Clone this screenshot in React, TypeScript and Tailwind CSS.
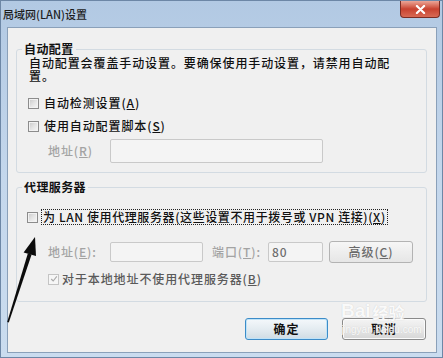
import React from "react";

const Key = ({ k }: { k: string }) => (
  <>
    (<span className="underline underline-offset-1">{k}</span>)
  </>
);

function CheckBox({ checked = false, disabled = false }: { checked?: boolean; disabled?: boolean }) {
  return (
    <span
      className={`flex h-[11px] w-[11px] shrink-0 items-center justify-center border ${
        disabled
          ? "border-[#c4c4c4] bg-[#f6f6f6]"
          : "border-[#8c8c8c] bg-gradient-to-br from-[#c8c8c8] via-[#e4e4e4] to-[#f8f8f8] shadow-[inset_0_0_0_1px_#f2f2f2]"
      }`}
    >
      {checked && (
        <svg viewBox="0 0 10 10" className="h-[8px] w-[8px]">
          <path d="M1.5 5 L4 7.5 L8.5 1.8" fill="none" stroke="#a9a9a9" strokeWidth="1.4" />
        </svg>
      )}
    </span>
  );
}

function Field({ w, h, children }: { w: string; h: string; children?: React.ReactNode }) {
  return (
    <div className={`${w} ${h} flex items-center rounded-[2px] border border-[#c9c9c9] bg-[#f4f4f4] pl-[3px] text-[#7a7a7a]`}>
      {children}
    </div>
  );
}

export default function App() {
  return (
    <div className="relative flex h-[358px] w-[443px] flex-col overflow-hidden border border-[#6d87a6] bg-gradient-to-b from-[#b2c9e3] via-[#c4d7ec] to-[#cadcef] font-['Noto_Sans_CJK_SC','Noto_Sans',sans-serif] text-[12px] font-medium tracking-[0.9px] text-[#111]">
      {/* title bar */}
      <div className="flex h-[26px] shrink-0 items-start justify-between">
        <span className="pl-[2px] pt-[6px] text-[11px] leading-[14px] tracking-normal text-[#1c1c1c]">
          局域网(LAN)设置
        </span>
        <div className="mr-[2px] flex h-[17px] w-[40px] items-center justify-center rounded-b-[4px] border border-t-0 border-[#7b2d24] bg-gradient-to-b from-[#eba597] via-[#c8412f] to-[#d86a55]">
          <svg viewBox="0 0 12 10" className="h-[9px] w-[11px]">
            <path d="M2 1 L10 9 M10 1 L2 9" stroke="#fff" strokeWidth="2.4" strokeLinecap="round" />
          </svg>
        </div>
      </div>

      {/* client area */}
      <div className="mb-[4px] ml-[6px] mr-[5px] flex flex-1 flex-col border border-[#8aa0b9] bg-[#f0f0f0] pl-[8px] pr-[9px] pt-[14px]">
        <fieldset className="rounded-[3px] border border-[#d3dbe2]">
          <legend className="ml-[5px] px-[2px] text-[12px] font-bold leading-[14px] tracking-[0.4px]">自动配置</legend>
          <div className="pb-[9px] pl-[11px]">
            <p className="ml-[1px] leading-[13px]">
              自动配置会覆盖手动设置。要确保使用手动设置，请禁用自动配
              <br />
              置。
            </p>
            <div className="mt-[14px] flex h-[14px] items-center gap-[5px]">
              <CheckBox />
              <span>
                自动检测设置<Key k="A" />
              </span>
            </div>
            <div className="mt-[9px] flex h-[14px] items-center gap-[5px]">
              <CheckBox />
              <span>
                使用自动配置脚本<Key k="S" />
              </span>
            </div>
            <div className="mt-[6px] flex h-[24px] items-center pl-[20px]">
              <span className="w-[62px] text-[#a3a3a3]">
                地址<Key k="R" />
              </span>
              <Field w="w-[213px]" h="h-[24px]" />
            </div>
          </div>
        </fieldset>

        <fieldset className="mt-[7px] rounded-[3px] border border-[#d3dbe2]">
          <legend className="ml-[5px] px-[2px] text-[12px] font-bold leading-[14px] tracking-[0.4px]">代理服务器</legend>
          <div className="pb-[15px] pl-[10px]">
            <div className="mt-[15px] flex h-[16px] items-center gap-[3px]">
              <CheckBox />
              <span className="border border-dotted border-[#222] px-[1px] leading-[14px] tracking-[0.6px]">
                为 LAN 使用代理服务器(这些设置不用于拨号或 VPN 连接)<Key k="X" />
              </span>
            </div>
            <div className="mt-[16px] flex h-[22px] items-center pl-[21px]">
              <span className="w-[62px] text-[#a3a3a3]">
                地址<Key k="E" />:
              </span>
              <Field w="w-[93px]" h="h-[20px]" />
              <span className="ml-[9px] w-[56px] text-[#a3a3a3]">
                端口<Key k="T" />:
              </span>
              <Field w="w-[55px]" h="h-[20px]">
                <span className="text-[#6e6e6e]">80</span>
              </Field>
              <button className="ml-[6px] flex h-[22px] w-[84px] items-center justify-center rounded-[3px] border border-[#b3b3b3] bg-gradient-to-b from-[#f6f6f6] to-[#e6e6e6] text-[#6a6a6a]">
                高级<Key k="C" />
              </button>
            </div>
            <div className="mt-[9px] flex h-[14px] items-center gap-[3px] pl-[21px]">
              <CheckBox checked disabled />
              <span className="text-[#5a5a5a]">
                对于本地地址不使用代理服务器<Key k="B" />
              </span>
            </div>
          </div>
        </fieldset>

        <div className="mt-[16px] flex justify-end gap-[14px] pr-[1px]">
          <button className="flex h-[22px] w-[83px] items-center justify-center rounded-[3px] border border-[#3c8cc8] bg-gradient-to-b from-[#f4f8fb] via-[#e4ecf1] to-[#cfdce4] font-bold shadow-[inset_0_0_0_1px_#bfe3f8]">
            确定
          </button>
          <button className="flex h-[22px] w-[84px] items-center justify-center rounded-[3px] border border-[#8a8a8a] bg-gradient-to-b from-[#f4f4f4] via-[#e8e8e8] to-[#d6d6d6] font-bold shadow-[inset_0_0_0_1px_#fbfbfb]">
            取消
          </button>
        </div>
      </div>

      {/* watermark */}
      <div className="pointer-events-none absolute left-[340px] top-[300px] flex flex-col text-white/90 [text-shadow:0_0_1px_#c4c4c4]">
        <div className="flex items-end gap-[2px] leading-none">
          <span className="font-['Liberation_Sans',sans-serif] text-[19px] font-bold tracking-normal">Bai</span>
          <span className="text-[16px] font-bold tracking-normal">经验</span>
        </div>
        <span className="mt-[2px] font-['Liberation_Sans',sans-serif] text-[10px] tracking-normal">jingyan.baidu.com</span>
      </div>

      {/* annotation arrow */}
      <svg className="pointer-events-none absolute left-0 top-0 h-[358px] w-[443px]" viewBox="0 0 443 358">
        <polygon points="6.2,321 7.8,321.4 30.6,253.6 26.8,252.4" fill="#0c0c0c" />
        <polygon points="34,236 22.6,251.4 35,255" fill="#0c0c0c" />
      </svg>
    </div>
  );
}
